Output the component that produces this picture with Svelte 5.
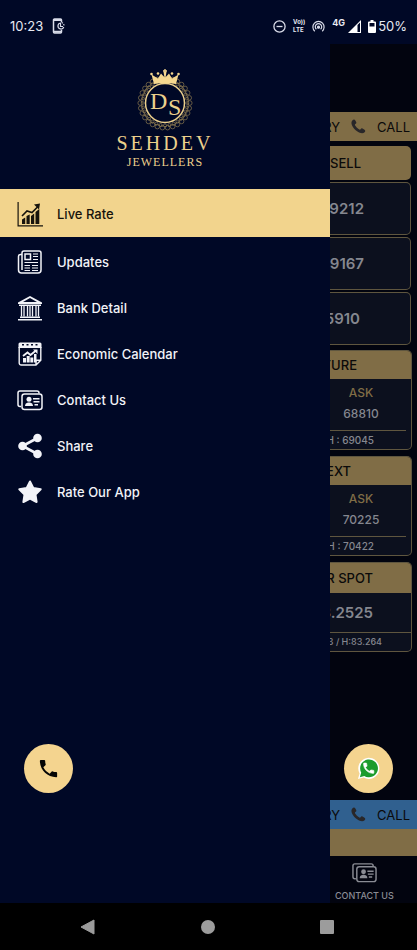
<script>
	const menu = [
		{ icon: "chart", label: "Live Rate" },
		{ icon: "news", label: "Updates" },
		{ icon: "bank", label: "Bank Detail" },
		{ icon: "calendar", label: "Economic Calendar" },
		{ icon: "contact", label: "Contact Us" },
		{ icon: "share", label: "Share" },
		{ icon: "star", label: "Rate Our App" },
	];

	const sellRates = ["59212", "59167", "5910"];

	const futures = [
		{ name: "FUTURE", ask: "68810", high: "69045" },
		{ name: "NEXT", ask: "70225", high: "70422" },
	];

	let active = $state("Live Rate");

	// small loops of the lace ring round the monogram
	const ring = (count, radius) =>
		Array.from({ length: count }, (_, i) => {
			const a = (i / count) * Math.PI * 2;
			return { x: 28 + Math.cos(a) * radius, y: 34 + Math.sin(a) * radius };
		});
	const outerLoops = ring(30, 24.8);
	const innerLoops = ring(32, 22.4);
</script>

{#snippet handset()}
	<path d="M6.6 10.8c1.5 2.8 3.8 5.1 6.6 6.6l2.2-2.2c.3-.3.7-.4 1-.2 1.1.4 2.3.6 3.6.6.6 0 1 .4 1 1V20c0 .6-.4 1-1 1C10.6 21 3 13.4 3 4c0-.6.4-1 1-1h3.5c.6 0 1 .4 1 1 0 1.3.2 2.5.6 3.6.1.3 0 .7-.3 1z" />
{/snippet}

{#snippet contactCard()}
	<g fill="none" stroke="currentColor" stroke-width="1.5">
		<path d="M4 19.500H3a2 2 0 0 1-2-2V6a2 2 0 0 1 2-2h17a2 2 0 0 1 2 2v.5" />
		<rect x="5" y="7" width="20" height="15.5" rx="2.5" />
	</g>
	<circle cx="12" cy="12.2" r="2.5" />
	<path d="M8 19c0-2.200 1.400-3.200 3-3.600h2c1.600.4 3 1.400 3 3.600z" />
	<path d="M16 11h6.500v1.400H16zM16.500 14h6v1.400h-6zM17.500 17h3.500v1.400h-3.500z" />
{/snippet}

{#snippet menuIcon(name)}
	<svg class="menu-icon" viewBox="0 0 26 26" fill="currentColor" aria-hidden="true">
		{#if name === "chart"}
			<path d="M.5 1h1.200v23.300H26v1.200H.5z" />
			<path d="M5 18.500l3.200-2V23H5zM9.500 15l3.200-1.500V23H9.500zM14 15l3.200-2.500V23H14zM18.500 11l3.800-3v15h-3.800z" />
			<path d="M5 15l5-5 5 1.500 6-6" fill="none" stroke="currentColor" stroke-width="1.6" />
			<path d="M17 3.500L23 2.500l-1 6z" />
		{:else if name === "news"}
			<g fill="none" stroke="currentColor" stroke-width="1.5">
				<path d="M5 5.500H3.500a2 2 0 0 0-2 2V21a3 3 0 0 0 3 3H21a3 3 0 0 0 3-3V4a2 2 0 0 0-2-2H7a2 2 0 0 0-2 2v17" />
				<rect x="8" y="5" width="5.5" height="5.5" />
				<path d="M16 5h5M16 7.500h5M16 10.500h5M7.500 13.500H21M7.500 16.500h5.500M15 16.500h6M7.500 19h5.500M15 19h6M7.500 21.500h5.500M15 21.500h6" stroke-width="1" />
			</g>
		{:else if name === "bank"}
			<path d="M13 1l12 6.500V9H1V7.500zM13 3L6 7h14z" fill-rule="evenodd" />
			<path d="M2 9.500h22v1.500H2zM3 21.500h20v1.500H3zM1 24h24v1.500H1z" />
			<path d="M4.500 11v10.500M7 11v10.500M10.500 11v10.500M13 11v10.500M15.500 11v10.500M19 11v10.500M21.500 11v10.500" fill="none" stroke="currentColor" stroke-width="1.3" />
		{:else if name === "calendar"}
			<path d="M3 1.500h20a1.500 1.500 0 0 1 1.500 1.500v4h-23V3A1.500 1.500 0 0 1 3 1.500zM5 3v1.500h2V3zM9.500 3v1.500h2V3zM14 3v1.500h2V3zM18.500 3v1.500h2V3z" fill-rule="evenodd" />
			<path d="M2.200 6v16a2 2 0 0 0 2 2H19l4.800-4.800V6M19 24v-4.800h4.800" fill="none" stroke="currentColor" stroke-width="1.4" />
			<path d="M6 17h3v4.500H6zM9.700 15h3v6.500h-3zM13.300 16.500h3v5h-3zM17 13h2.500v8.500H17z" />
			<path d="M6 15l4.500-3.500 3 2.500L19 9.500" fill="none" stroke="currentColor" stroke-width="1.8" />
			<path d="M16 8.500h4.500V13z" />
		{:else if name === "contact"}
			{@render contactCard()}
		{:else if name === "share"}
			<path d="M20.500 5L5.500 13l15 8" fill="none" stroke="currentColor" stroke-width="2.6" />
			<circle cx="20.5" cy="5" r="4.3" />
			<circle cx="5.5" cy="13" r="4.3" />
			<circle cx="20.5" cy="21" r="4.3" />
		{:else}
			<path d="M13 2.500l3.400 6.600 7.300 1.200-5.200 5.300 1.100 7.400-6.600-3.400L6.400 23l1.100-7.400-5.200-5.300 7.300-1.200z" stroke="currentColor" stroke-width="2" stroke-linejoin="round" />
		{/if}
	</svg>
{/snippet}

{#snippet ticker(tone)}
	<div class="ticker {tone}">
		<span>QUERY</span>
		<svg viewBox="2 2 20 20" fill="#292729" aria-hidden="true">
			<path d="M4 3.500c1.700-1.600 3-1 4 .7l1 2.200c.4 1-.1 1.800-1.200 2.400-.8.5-.7 1.200 0 2.300 1.200 2 2.800 3.600 4.800 4.700 1 .6 1.700.6 2.200-.2.7-1 1.500-1.400 2.500-.9l2.300 1.300c1.500 1 2 2.200.6 3.600-2.300 2.400-6 1.600-9.600-.8-3.300-2.200-6-5.200-7.300-8.400C2.200 7.600 2.300 5 4 3.500z" />
		</svg>
		<span>CALL</span>
	</div>
{/snippet}

<div class="screen">
	<header class="status">
		<time>10:23</time>
		<svg class="rotate" width="13" height="16" viewBox="0 0 13 16" fill="none" stroke="#d8dbe8" aria-hidden="true">
			<path d="M9.500 4V2a1 1 0 0 0-1-1h-6a1 1 0 0 0-1 1v12a1 1 0 0 0 1 1h6a1 1 0 0 0 1-1v-2" stroke-width="1.5" />
			<path d="M1.500 2h8M1.500 13.800h8" stroke-width="2" />
			<path d="M9 5a3 3 0 1 0 2.800 4M8.500 5.200v3.300h2.500" stroke-width="1.2" />
			<path d="M9.500 4.500a3.500 3.500 0 0 1 2.500 3" stroke-width="1.2" stroke-dasharray="1.5 1" />
		</svg>
		<div class="signals">
			<svg width="13" height="13" viewBox="0 0 13 13" fill="none" stroke="#d8dbe8" stroke-width="1.3" aria-hidden="true">
				<circle cx="6.5" cy="6.5" r="5.6" />
				<path d="M3.500 6.500h6" />
			</svg>
			<span class="volte"><span>Vo))</span><span>LTE</span></span>
			<svg width="13" height="13" viewBox="0 0 13 13" fill="none" stroke="#d8dbe8" stroke-width="1.2" aria-hidden="true">
				<path d="M2.800 11.200a5.600 5.600 0 1 1 7.400 0M4.400 9.300a3.200 3.200 0 1 1 4.200 0" />
				<circle cx="6.5" cy="7.2" r="1" fill="#d8dbe8" />
			</svg>
			<span class="network">4G</span>
			<svg width="13" height="13" viewBox="0 0 13 13" aria-hidden="true">
				<path d="M0 13L13 0v13z" fill="#fff" />
				<path d="M9.500 5l2.500-2.500V12H9.500z" fill="#000826" />
			</svg>
			<svg class="battery" width="8" height="13" viewBox="0 0 8 13" aria-hidden="true">
				<path d="M2.500 0h3v1.500H7a1 1 0 0 1 1 1V12a1 1 0 0 1-1 1H1a1 1 0 0 1-1-1V2.500a1 1 0 0 1 1-1h1.500z" fill="#fff" />
				<path d="M1.500 3h5v3.500h-5z" fill="#000826" />
			</svg>
			<span>50%</span>
		</div>
	</header>

	<div class="body">
		<aside class="drawer">
			<div class="logo">
				<svg width="56" height="62" viewBox="0 0 56 62" role="img" aria-label="DS">
					<g fill="none" stroke="#8d7a50" stroke-width=".7">
						{#each outerLoops as loop}
							<circle cx={loop.x} cy={loop.y} r="2.3" />
						{/each}
						{#each innerLoops as loop}
							<circle cx={loop.x} cy={loop.y} r="1.5" />
						{/each}
						<circle cx="28" cy="34" r="23.5" stroke-dasharray="2 1.5" />
					</g>
					<circle cx="28" cy="34" r="19.5" fill="#000826" stroke="#ecd08c" stroke-width="1.5" />
					<path d="M17 15L14.500 5.500l6.500 4 3-5 3.500 4L26.500 3h3L28.500 8.500l3.500-4 3 5 6.500-4L39 15c-7-1.500-15-1.500-22 0z" fill="#f5d88f" />
					<path d="M28 0v5M26 2h4" stroke="#f5d88f" stroke-width="1.3" />
					<g fill="#f5d88f">
						<circle cx="14.5" cy="5" r="1.3" />
						<circle cx="21" cy="4.5" r="1.3" />
						<circle cx="35" cy="4.5" r="1.3" />
						<circle cx="41.5" cy="5" r="1.3" />
					</g>
					<text x="13" y="40" class="mono">D</text>
					<text x="31" y="46" class="mono">S</text>
				</svg>
				<span class="brand">SEHDEV</span>
				<span class="trade">JEWELLERS</span>
			</div>

			<nav>
				{#each menu as item}
					<button class="item" class:active={active === item.label} onclick={() => (active = item.label)}>
						{@render menuIcon(item.icon)}
						<span>{item.label}</span>
					</button>
				{/each}
			</nav>

			<button class="fab call" aria-label="Call">
				<svg width="23" height="23" viewBox="0 0 24 24" fill="#050505" aria-hidden="true">{@render handset()}</svg>
			</button>
		</aside>

		<main class="page">
			{@render ticker("gold")}

			<div class="rates">
				<h2 class="sell">SELL</h2>
				{#each sellRates as rate, i}
					<div class="rate" class:short={i === 2}>{rate}</div>
				{/each}
			</div>

			{#each futures as future}
				<section class="card">
					<h2 class:next={future.name === "NEXT"}>{future.name}</h2>
					<div class="ask">
						<span class="ask-label">ASK</span>
						<span>{future.ask}</span>
					</div>
					<p>H : {future.high}</p>
				</section>
			{/each}

			<section class="card spot">
				<h2>INR SPOT</h2>
				<div class="spot-rate">83.2525</div>
				<p>L:82.823 / H:83.264</p>
			</section>

			<button class="fab whatsapp" aria-label="WhatsApp">
				<svg width="23" height="23" viewBox="0 0 24 24" aria-hidden="true">
					<path d="M1 23l1.700-5.800A11 11 0 1 1 7 21.500z" fill="#fff" />
					<path d="M3 21l1.400-4.700A9.300 9.300 0 1 1 7.600 19.700z" fill="#1c9c2c" />
					<g transform="translate(5 4.5) scale(.6)" fill="#fff" stroke="#fff">{@render handset()}</g>
				</svg>
			</button>

			{@render ticker("blue")}
			<div class="strip"></div>
			<a class="tab" href="#contact">
				<svg width="25" height="25" viewBox="0 0 26 26" fill="currentColor" aria-hidden="true">{@render contactCard()}</svg>
				<span>CONTACT US</span>
			</a>
		</main>
	</div>

	<footer class="system">
		<button aria-label="Back">
			<svg width="16" height="16" viewBox="0 0 16 16"><path d="M14 1v14L1 8z" fill="#9c9c9c" stroke="#9c9c9c" stroke-linejoin="round" /></svg>
		</button>
		<button aria-label="Home">
			<svg width="16" height="16" viewBox="0 0 16 16"><circle cx="8" cy="8" r="7" fill="#9c9c9c" /></svg>
		</button>
		<button aria-label="Recent apps">
			<svg width="16" height="16" viewBox="0 0 16 16"><rect x="1" y="1" width="14" height="14" rx="1" fill="#9c9c9c" /></svg>
		</button>
	</footer>
</div>

<style>
	:global(body) {
		margin: 0;
		background: #000;
	}

	.screen {
		display: flex;
		flex-direction: column;
		min-height: 100vh;
		background: #000826;
		font-family: Inter, "Open Sans", sans-serif;
	}

	button {
		border: none;
		padding: 0;
		background: none;
		font: inherit;
		cursor: pointer;
	}

	svg {
		flex: none;
	}

	.status {
		display: flex;
		align-items: center;
		height: 44px;
		padding: 8px 10px 0;
		box-sizing: border-box;
		color: #e8eaf2;
		font-size: 13px;
	}

	.rotate {
		margin-left: 9px;
	}

	.signals {
		display: flex;
		align-items: center;
		margin-left: auto;
	}

	.volte {
		display: flex;
		flex-direction: column;
		margin: 0 7px;
		font-size: 6px;
		font-weight: 700;
		line-height: 8px;
	}

	.network {
		align-self: flex-start;
		margin: 0 3px 0 7px;
		font-size: 9px;
		font-weight: 700;
		line-height: 10px;
	}

	.battery {
		margin: 0 2px 0 7px;
	}

	.body {
		display: flex;
		flex: 1;
	}

	.drawer {
		display: flex;
		flex-direction: column;
		flex: none;
		width: 79.1%;
	}

	.logo {
		display: flex;
		flex-direction: column;
		align-items: center;
		height: 145px;
		padding-top: 25px;
		box-sizing: border-box;
		color: #ecd08c;
		font-family: "Liberation Serif", serif;
	}

	.mono {
		fill: #ecd08c;
		font-family: "Liberation Serif", serif;
		font-size: 24px;
	}

	.brand {
		font-size: 20px;
		line-height: 24px;
		letter-spacing: 3px;
	}

	.trade {
		font-size: 12px;
		line-height: 14px;
		letter-spacing: 1px;
	}

	.item {
		display: flex;
		align-items: center;
		gap: 14px;
		width: 100%;
		height: 46px;
		padding: 0 17px;
		color: #f2f3f8;
		font-size: 13px;
		font-weight: 500;
	}

	.item.active {
		height: 48px;
		margin-bottom: 2px;
		padding-top: 2px;
		background: #f2d48d;
		color: #16130c;
	}

	.menu-icon {
		width: 26px;
		height: 26px;
	}

	.fab {
		display: flex;
		align-items: center;
		justify-content: center;
		flex: none;
		width: 49px;
		height: 49px;
		margin-top: auto;
		border-radius: 50%;
		background: #f4d48f;
	}

	.call {
		margin-bottom: 110px;
		margin-left: 24px;
	}

	.page {
		display: flex;
		flex-direction: column;
		flex: 1;
		min-width: 0;
		padding-top: 68px;
		overflow: hidden;
		background: #02040f;
		color: #85878f;
		white-space: nowrap;
	}

	.ticker {
		display: flex;
		align-items: center;
		justify-content: flex-end;
		gap: 11px;
		height: 29px;
		padding-right: 7px;
		color: #0b0a0a;
		font-size: 13px;
	}

	.ticker svg {
		width: 15px;
		height: 15px;
	}

	.gold {
		background: #806d46;
	}

	.blue {
		background: #30608f;
	}

	.rates {
		display: flex;
		flex-direction: column;
		gap: 2px;
		margin: 5px 6px 5px 0;
	}

	h2 {
		margin: 0;
		background: #806d46;
		color: #0b0a0a;
		font-size: 13px;
		font-weight: 500;
	}

	.sell,
	.rate {
		display: flex;
		align-items: center;
		justify-content: flex-end;
		height: 34px;
		padding-right: 50px;
		border-radius: 0 5px 5px 0;
	}

	.rate {
		height: 51px;
		padding-right: 46px;
		border: 1px solid #5f563f;
		border-left: none;
		background: #0c101e;
		font-size: 15px;
		font-weight: 600;
	}

	.rate.short {
		padding-right: 50px;
	}

	.card {
		margin: 0 5px 6px 0;
		border: 1px solid #5f563f;
		border-left: none;
		border-radius: 0 5px 5px 0;
		background: #0c101e;
		overflow: hidden;
	}

	.card h2 {
		display: flex;
		justify-content: flex-end;
		padding-right: 54px;
		line-height: 28px;
	}

	.card h2.next {
		padding-right: 60px;
	}

	.ask {
		display: flex;
		flex-direction: column;
		align-items: center;
		float: right;
		width: 100px;
		padding: 3px 0 6px;
		font-size: 12px;
		font-weight: 500;
		line-height: 21px;
	}

	.ask-label {
		color: #806d46;
	}

	.card p {
		display: flex;
		justify-content: flex-end;
		clear: both;
		margin: 0 5px 0 0;
		padding-right: 32px;
		border-top: 1px solid #5f563f;
		font-size: 10px;
		font-weight: 500;
		line-height: 18px;
	}

	.card.spot h2 {
		padding-right: 38px;
		line-height: 30px;
	}

	.spot-rate {
		display: flex;
		justify-content: flex-end;
		padding-right: 38px;
		font-size: 15px;
		font-weight: 600;
		line-height: 39px;
	}

	.card.spot p {
		margin: 0;
		padding-right: 29px;
		font-size: 9px;
	}

	.whatsapp {
		align-self: center;
		margin-right: 10px;
		margin-bottom: 7px;
	}

	.strip {
		height: 27px;
		background: #806d46;
	}

	.tab {
		display: flex;
		flex-direction: column;
		align-items: center;
		height: 47px;
		padding: 4px 18px 0 0;
		box-sizing: border-box;
		color: #8a8c94;
		font-size: 9px;
		font-weight: 500;
		line-height: 22px;
		text-decoration: none;
	}

	.system {
		display: flex;
		align-items: center;
		justify-content: space-between;
		height: 47px;
		padding: 0 82px 0 80px;
		background: #000;
	}

	.system button {
		display: flex;
	}
</style>
